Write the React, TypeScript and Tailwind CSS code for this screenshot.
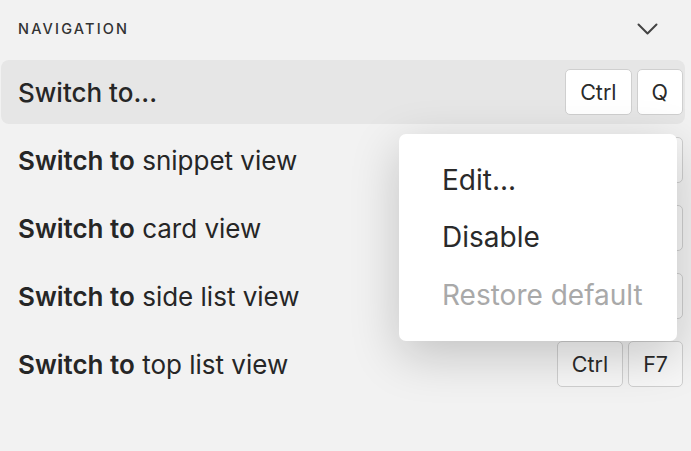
import React from "react";

const rows = [
    { bold: "", rest: "Switch to...", keys: ["Ctrl", "Q"], active: true },
    { bold: "Switch to", rest: " snippet view", keys: ["Ctrl", "F4"] },
    { bold: "Switch to", rest: " card view", keys: ["Ctrl", "F5"] },
    { bold: "Switch to", rest: " side list view", keys: ["Ctrl", "F6"] },
    { bold: "Switch to", rest: " top list view", keys: ["Ctrl", "F7"] },
];

function Key({ label, active }: { label: string; active?: boolean }) {
    return (
        <span
            className={
                "flex h-[46px] min-w-[46px] items-center justify-center rounded-[5px] border-[1.5px] border-[#cfcfcf] px-[14px] text-[21.5px] text-[#2a2a2a] " +
                (active ? "bg-white" : "bg-white/40")
            }
        >
            {label}
        </span>
    );
}

export default function App() {
    return (
        <div
            className="relative h-[451px] w-[691px] overflow-hidden bg-[#f2f2f2] pl-[1px] pr-[6px] text-[#262626]"
            style={{ fontFamily: "Inter, 'Noto Sans', sans-serif" }}
        >
            <div className="flex h-[60px] items-center justify-between pb-[2px] pl-[17px] pr-[27px]">
                <span className="text-[14.5px] font-medium tracking-[0.15em] text-[#333]">
                    NAVIGATION
                </span>
                <svg width="21" height="13" viewBox="0 0 21 13" fill="none">
                    <path
                        d="M1.5 1.5 L10.5 10.5 L19.5 1.5"
                        stroke="#444"
                        strokeWidth="2"
                        strokeLinecap="round"
                        strokeLinejoin="round"
                    />
                </svg>
            </div>

            <div className="flex flex-col gap-[4px]">
                {rows.map((row, i) => (
                    <div
                        key={i}
                        className={
                            "flex h-[64px] items-center justify-between rounded-[8px] pl-[17px] pr-[2px] text-[26px] " +
                            (row.active ? "bg-[#e6e6e6]" : "")
                        }
                    >
                        <span>
                            {row.bold && (
                                <span className="font-semibold">{row.bold}</span>
                            )}
                            <span className={row.active ? "font-medium" : ""}>
                                {row.rest}
                            </span>
                        </span>
                        <div className="flex gap-[5px]">
                            {row.keys.map((k) => (
                                <Key key={k} label={k} active={row.active} />
                            ))}
                        </div>
                    </div>
                ))}
            </div>

            {/* context menu */}
            <div className="absolute left-[399px] top-[134px] w-[278px] rounded-[7px] bg-white py-[17px] shadow-[0_14px_50px_rgba(0,0,0,0.2)]">
                {["Edit...", "Disable", "Restore default"].map((item, i) => (
                    <div
                        key={item}
                        className={
                            "flex h-[57.5px] items-center pl-[43px] text-[28px] " +
                            (i === 2 ? "text-[#a9a9a9]" : "text-[#2a2a2a]")
                        }
                    >
                        {item}
                    </div>
                ))}
            </div>
        </div>
    );
}
